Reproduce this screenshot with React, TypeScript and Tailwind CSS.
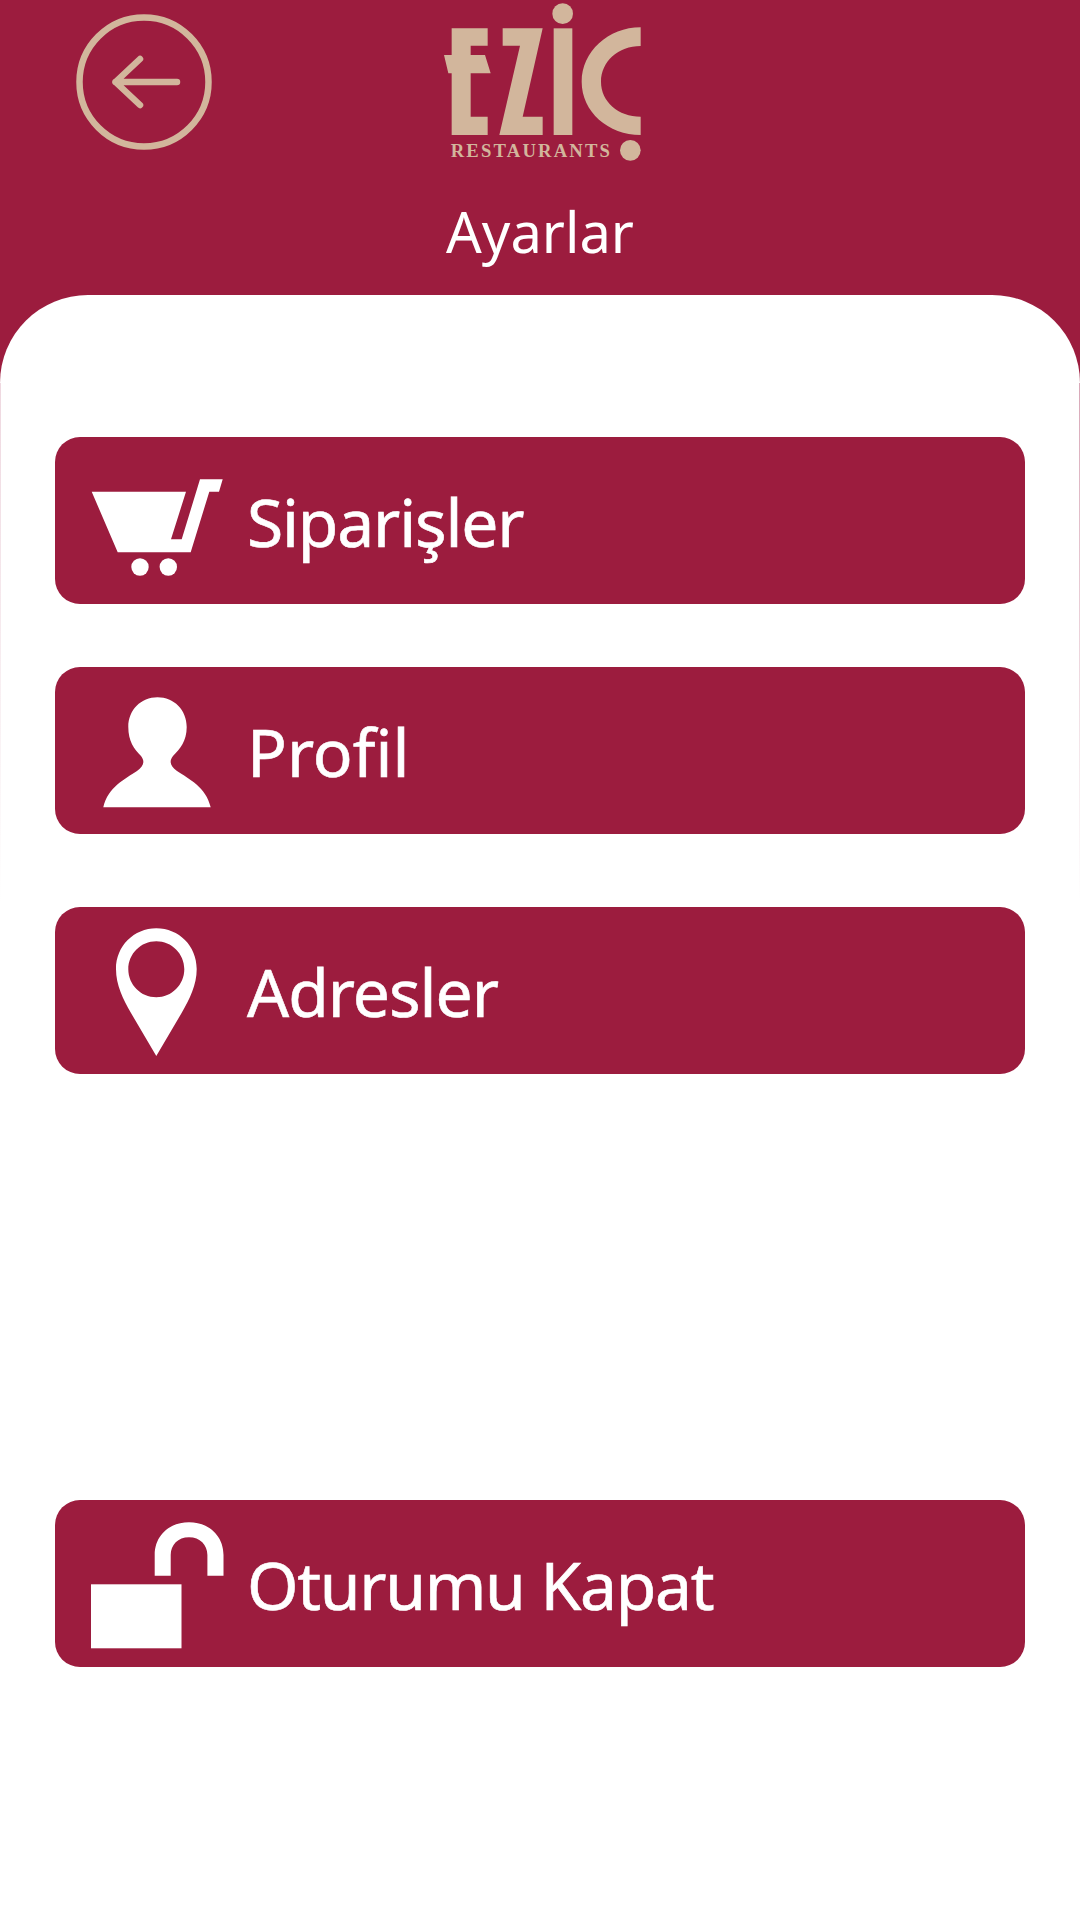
import React from "react";

const MenuButton = ({ className, label, textClass, children }: { className: string; label: string; textClass: string; children: React.ReactNode }) => (
  <div className={`mx-[55px] h-[167px] rounded-[25px] bg-[#9c1c3e] flex items-center ${className}`}>
    <svg width="192" height="167" viewBox="0 0 192 167" className="shrink-0" fill="#ffffff">
      {children}
    </svg>
    <span className={`text-white font-['Noto_Sans',sans-serif] [-webkit-text-stroke:0.6px_#ffffff] text-[66px] leading-[80px] ${textClass}`}>{label}</span>
  </div>
);

export default function App() {
  return (
    <div className="w-[1080px] h-[1920px] bg-[#9c1c3e] flex flex-col overflow-hidden">
      <header className="h-[295px] shrink-0 flex flex-col">
        <div className="flex items-start h-[170px] pl-[71px]">
          <svg width="146" height="146" viewBox="0 0 146 146" className="mt-[9px] shrink-0" fill="none" stroke="#d2b69c" strokeWidth="6.5" strokeLinecap="round" strokeLinejoin="round">
            <circle cx="73" cy="73" r="64.5" />
            <path d="M106 73H44.5M69 50L44.5 73L69 96" />
          </svg>
          <svg width="220" height="170" viewBox="0 0 660 510" className="ml-[213px] shrink-0" fill="#d2b69c">
            <polygon points="65,85 173,85 173,137 122,137 122,165 165,165 182,220 122,220 122,350 173,350 173,405 65,405 65,220 55,220 42,165 65,165" />
            <polygon points="218,85 338,85 278,350 338,350 338,405 208,405 270,137 218,137" />
            <rect x="371" y="85" width="56" height="320" />
            <circle cx="398" cy="41" r="31" />
            <path d="M632 82C535 82 455 155 455 245C455 335 535 405 632 405V350C565 350 513 305 513 245C513 185 565 138 632 138Z" />
            <circle cx="601" cy="451" r="31" />
            <text x="62" y="472" fontSize="56" fontWeight="700" textLength="478" lengthAdjust="spacing" className="font-['Liberation_Serif',serif]">RESTAURANTS</text>
          </svg>
        </div>
        <h1 className="mt-[29px] text-center text-white font-['Noto_Sans',sans-serif] font-normal text-[56px] leading-[64px]">Ayarlar</h1>
      </header>
      <main className="relative flex-1 bg-white rounded-t-[88px] flex flex-col">
        <div className="absolute right-0 top-[88px] w-px h-[520px] bg-linear-to-b from-[#d8a8b8] to-transparent" />
        <div className="absolute left-0 top-[88px] w-px h-[520px] bg-linear-to-b from-[#efd8e0] to-transparent" />
        <MenuButton className="mt-[142px]" label="Siparişler" textClass="tracking-[-1.2px]">
          <polygon points="36.7,54.7 131,54.7 116,102.3 126.7,102.3 145,42.3 167.7,42.3 164,54.7 154.3,54.7 135.7,115.3 62.7,115.3" />
          <circle cx="85" cy="130" r="8.7" />
          <circle cx="113.3" cy="130" r="8.7" />
        </MenuButton>
        <MenuButton className="mt-[63px]" label="Profil" textClass="tracking-[0px]">
          <path d="M48.3 140.3C53 120 70 112 82 104C89 99 90 94 86 89C79 82 73.3 74 73.3 60C73.3 43 86 30.3 102.5 30.3C119 30.3 131.7 43 131.7 60C131.7 74 125 82 118 89C114 94 115 99 122 104C134 112 151 120 155.7 140.3Z" />
        </MenuButton>
        <MenuButton className="mt-[73px]" label="Adresler" textClass="tracking-[-1px]">
          <path fillRule="evenodd" d="M101.3 149L76 106C68 92 61 78 61 62C61 39 79 21.3 101.3 21.3C124 21.3 141.7 39 141.7 62C141.7 78 134.6 92 126.6 106ZM101.3 34.3C85.8 34.3 73.3 46.8 73.3 62.3C73.3 77.8 85.8 90.3 101.3 90.3C116.8 90.3 129.3 77.8 129.3 62.3C129.3 46.8 116.8 34.3 101.3 34.3Z" />
        </MenuButton>
        <MenuButton className="mt-[426px]" label="Oturumu Kapat" textClass="tracking-[-1.3px]">
          <rect x="36" y="84.3" width="90.5" height="64" />
          <path d="M99.7 75.7V55C99.7 35 115 22.3 134 22.3C153 22.3 168.5 35 168.5 55V75.7H152.4V55C152.4 45 145 37.3 134 37.3C123 37.3 115.7 45 115.7 55V75.7Z" />
        </MenuButton>
      </main>
    </div>
  );
}
